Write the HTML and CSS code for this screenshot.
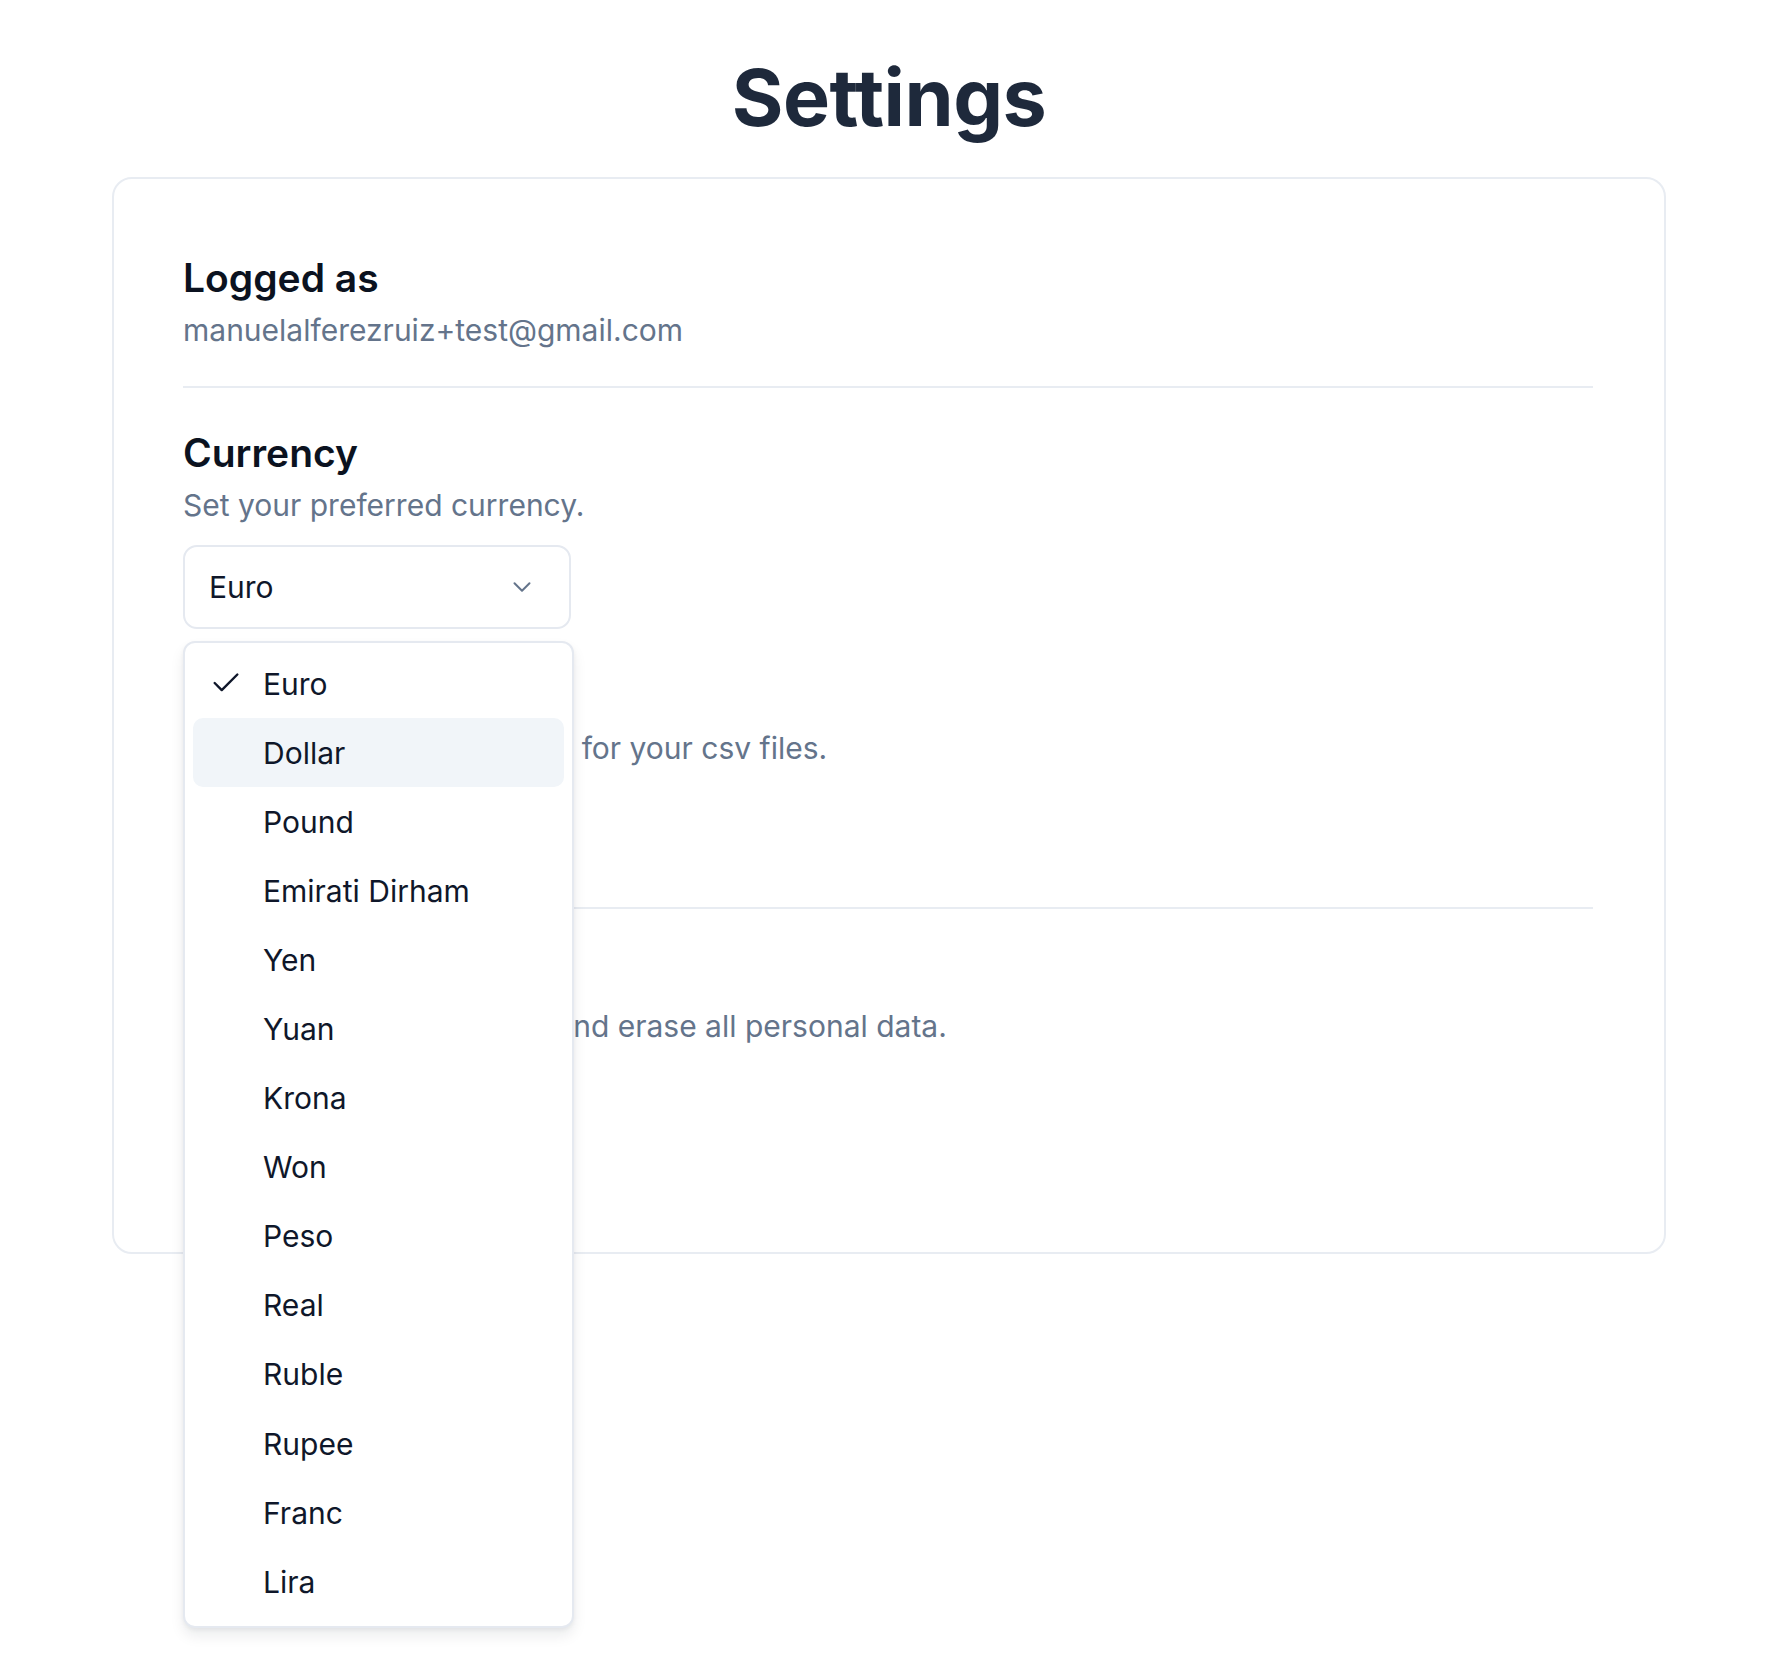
FILE: index.html
```html
<!DOCTYPE html>
<html lang="en">
<head>
<meta charset="utf-8">
<title>Settings</title>
<link rel="stylesheet" href="styles.css">
</head>
<body>
<main class="page">
  <h1 class="title">Settings</h1>
  <div class="card">
    <section class="section">
      <h2 class="heading">Logged as</h2>
      <p class="desc">manuelalferezruiz+test@gmail.com</p>
    </section>
    <section class="section">
      <div class="group">
        <h2 class="heading">Currency</h2>
        <p class="desc">Set your preferred currency.</p>
        <div class="select-wrap">
          <button class="select" type="button">
            <span>Euro</span>
            <svg class="chevron" viewBox="0 0 24 24" fill="none" stroke="currentColor" stroke-width="1.6" stroke-linecap="round" stroke-linejoin="round"><path d="m6 9 6 6 6-6"/></svg>
          </button>
          <ul class="menu">
            <li class="item"><svg class="check" viewBox="0 0 24 24" fill="none" stroke="currentColor" stroke-width="1.7" stroke-linecap="round" stroke-linejoin="round"><path d="M20 6 9 17l-5-5"/></svg>Euro</li>
            <li class="item active">Dollar</li>
            <li class="item">Pound</li>
            <li class="item">Emirati Dirham</li>
            <li class="item">Yen</li>
            <li class="item">Yuan</li>
            <li class="item">Krona</li>
            <li class="item">Won</li>
            <li class="item">Peso</li>
            <li class="item">Real</li>
            <li class="item">Ruble</li>
            <li class="item">Rupee</li>
            <li class="item">Franc</li>
            <li class="item">Lira</li>
          </ul>
        </div>
      </div>
      <div class="group group-csv">
        <h2 class="heading">CSV Delimiter</h2>
        <p class="desc">Set your preferred delimiter for your csv files.</p>
        <button class="select" type="button"><span>Comma</span></button>
      </div>
    </section>
    <section class="section">
      <h2 class="heading">Delete account</h2>
      <p class="desc">Delete your user account, and erase all personal data.</p>
      <button class="danger" type="button">Delete account</button>
    </section>
  </div>
</main>
</body>
</html>
```
FILE: styles.css
```css
* { box-sizing: border-box; }
html, body { margin: 0; padding: 0; background: #ffffff; }
body {
  min-height: 1680px;
  font-family: Inter, "Noto Sans", "Liberation Sans", sans-serif;
  color: #0f172a;
}
.page {
  width: 1554px;
  margin-left: 112px;
  padding-top: 57px;
  padding-bottom: 400px;
}
.title {
  margin: 0 0 39px;
  text-align: center;
  font-size: 79px;
  line-height: 81px;
  font-weight: 700;
  color: #1e293b;
  letter-spacing: -0.5px;
}
.card {
  border: 2px solid #e8ecf2;
  border-radius: 20px;
  padding: 69px 71px 102px 69px;
  background: #fff;
}
.section {
  padding: 35px 0;
  border-top: 2px solid #e8ecf2;
}
.section:first-child { border-top: 0; padding-top: 0; padding-bottom: 34px; }
.section:last-child { padding-bottom: 0; }
.heading {
  margin: 0;
  font-size: 39px;
  line-height: 60px;
  font-weight: 600;
  color: #0b1220;
}
.desc {
  margin: 0;
  font-size: 30px;
  line-height: 44px;
  color: #64748b;
}
.group-csv { margin-top: 37px; }
.select-wrap { position: relative; width: 388px; margin-top: 18px; }
.select {
  display: flex;
  align-items: center;
  justify-content: space-between;
  width: 388px;
  height: 84px;
  padding: 0 32px 0 24px;
  border: 2px solid #e5e9f0;
  border-radius: 14px;
  background: #fff;
  font-family: inherit;
  font-size: 30px;
  color: #0f172a;
  text-align: left;
}
.group-csv .select { margin-top: 18px; }
.chevron { width: 30px; height: 30px; color: #64748b; }
.menu {
  position: absolute;
  top: 96px;
  left: 0;
  width: 391px;
  margin: 0;
  padding: 6px 8px 10px;
  list-style: none;
  background: #fff;
  border: 2px solid #e5e9f0;
  border-radius: 12px;
  box-shadow: 0 8px 14px rgba(15, 23, 42, 0.08), 0 2px 4px rgba(15, 23, 42, 0.05);
  z-index: 5;
}
.item {
  position: relative;
  display: flex;
  align-items: center;
  height: 69.1px;
  padding-left: 70px;
  border-radius: 10px;
  font-size: 30px;
  color: #0f172a;
}
.item.active { background: #f1f5f9; }
.check {
  position: absolute;
  left: 16px;
  top: 50%;
  width: 34px;
  height: 34px;
  margin-top: -18px;
  color: #0f172a;
}
.danger {
  margin-top: 18px;
  height: 84px;
  padding: 0 32px;
  border: 0;
  border-radius: 14px;
  background: #ef4444;
  color: #fff;
  font-family: inherit;
  font-size: 30px;
}
```
